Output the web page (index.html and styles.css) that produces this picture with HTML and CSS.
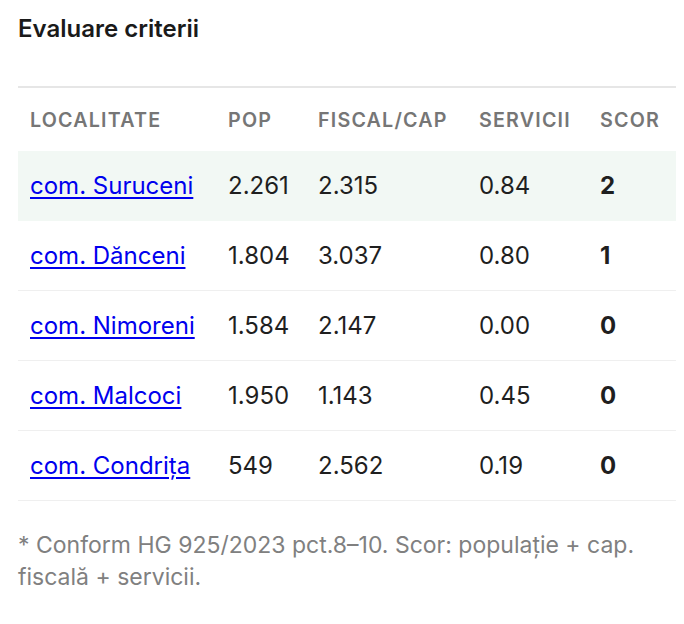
FILE: index.html
```html
<!DOCTYPE html>
<html lang="ro">
<head>
<meta charset="utf-8">
<link rel="stylesheet" href="styles.css">
</head>
<body>
<div class="card">
  <h2 class="title">Evaluare criterii</h2>
  <table class="crit">
    <colgroup>
      <col class="c1"><col class="c2"><col class="c3"><col class="c4"><col class="c5">
    </colgroup>
    <thead>
      <tr><th>Localitate</th><th>Pop</th><th>Fiscal/cap</th><th>Servicii</th><th>Scor</th></tr>
    </thead>
    <tbody>
      <tr class="hl"><td><a href="#">com. Suruceni</a></td><td>2.261</td><td>2.315</td><td>0.84</td><td class="score">2</td></tr>
      <tr><td><a href="#">com. Dănceni</a></td><td>1.804</td><td>3.037</td><td>0.80</td><td class="score">1</td></tr>
      <tr><td><a href="#">com. Nimoreni</a></td><td>1.584</td><td>2.147</td><td>0.00</td><td class="score">0</td></tr>
      <tr><td><a href="#">com. Malcoci</a></td><td>1.950</td><td>1.143</td><td>0.45</td><td class="score">0</td></tr>
      <tr><td><a href="#">com. Condrița</a></td><td>549</td><td>2.562</td><td>0.19</td><td class="score">0</td></tr>
    </tbody>
  </table>
  <p class="note">* Conform HG 925/2023 pct.8–10. Scor: populație + cap. fiscală + servicii.</p>
</div>
</body>
</html>
```
FILE: styles.css
```css
html, body { margin: 0; padding: 0; background: #fff; }
body { font-family: Inter, "Noto Sans", sans-serif; color: #1f1f1f; }
.card { padding: 14px 8px 0 18px; }
.title { margin: 0; font-size: 24px; font-weight: 600; line-height: 30px; color: #1a1a1a; }
.crit { margin-top: 42px; width: 658px; border-collapse: collapse; table-layout: fixed; border-top: 2px solid #e6e6e6; }
.c1 { width: 198px; } .c2 { width: 90px; } .c3 { width: 161px; } .c4 { width: 121px; } .c5 { width: 88px; }
.crit th { text-align: left; font-size: 19.7px; font-weight: 600; letter-spacing: 0.06em; text-transform: uppercase; color: #767676; padding: 0 12px; height: 63px; white-space: nowrap; }
.crit td { font-size: 24px; padding: 0 12px; height: 69px; border-bottom: 1px solid #efefef; white-space: nowrap; }
.crit tr.hl td { background: #f2f8f4; border-bottom-color: #f2f8f4; }
.crit a { color: #0000ee; text-decoration: underline; text-underline-offset: 3px; }
.score { font-weight: 700; }
.note { margin: 28px 0 0; font-size: 23px; line-height: 32px; color: #808080; }
```
